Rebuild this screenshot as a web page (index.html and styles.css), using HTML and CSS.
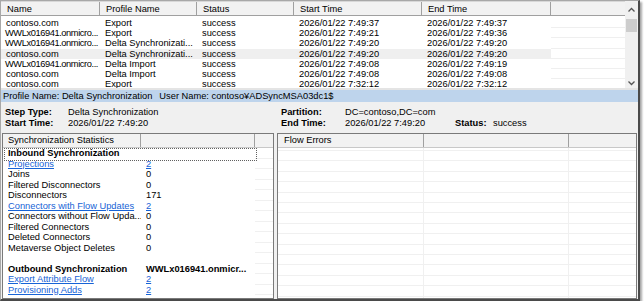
FILE: index.html
```html
<!DOCTYPE html>
<html>
<head>
<meta charset="utf-8">
<link rel="stylesheet" href="styles.css">
</head>
<body>
<div class="window">
  <div class="list">
    <div class="table">
      <div class="lrow head">
        <div class="c">Name</div><div class="c">Profile Name</div><div class="c">Status</div><div class="c">Start Time</div><div class="c">End Time</div><div class="c"></div>
      </div>
      <div class="lbody">
        <div class="lrow"><div class="c">contoso.com</div><div class="c">Export</div><div class="c">success</div><div class="c">2026/01/22 7:49:37</div><div class="c">2026/01/22 7:49:37</div><div class="c blank"></div></div>
        <div class="lrow"><div class="c tight">WWLx016941.onmicro...</div><div class="c">Export</div><div class="c">success</div><div class="c">2026/01/22 7:49:21</div><div class="c">2026/01/22 7:49:36</div><div class="c blank"></div></div>
        <div class="lrow"><div class="c tight">WWLx016941.onmicro...</div><div class="c">Delta Synchronizati...</div><div class="c">success</div><div class="c">2026/01/22 7:49:20</div><div class="c">2026/01/22 7:49:20</div><div class="c blank"></div></div>
        <div class="lrow sel"><div class="c">contoso.com</div><div class="c">Delta Synchronizati...</div><div class="c">success</div><div class="c">2026/01/22 7:49:20</div><div class="c">2026/01/22 7:49:20</div><div class="c blank"></div></div>
        <div class="lrow"><div class="c tight">WWLx016941.onmicro...</div><div class="c">Delta Import</div><div class="c">success</div><div class="c">2026/01/22 7:49:08</div><div class="c">2026/01/22 7:49:19</div><div class="c blank"></div></div>
        <div class="lrow"><div class="c">contoso.com</div><div class="c">Delta Import</div><div class="c">success</div><div class="c">2026/01/22 7:49:08</div><div class="c">2026/01/22 7:49:08</div><div class="c blank"></div></div>
        <div class="lrow"><div class="c">contoso.com</div><div class="c">Export</div><div class="c">success</div><div class="c">2026/01/22 7:32:12</div><div class="c">2026/01/22 7:32:12</div><div class="c blank"></div></div>
      </div>
    </div>
    <div class="vscroll">
      <svg class="arrow" width="13" height="10" viewBox="0 0 13 10"><path d="M3.5 6.5 L6.5 3.5 L9.5 6.5" fill="none" stroke="#555" stroke-width="1.3"/></svg>
      <div class="track"><div class="thumb"></div></div>
      <svg class="arrow" width="13" height="10" viewBox="0 0 13 10"><path d="M3.5 3.5 L6.5 6.5 L9.5 3.5" fill="none" stroke="#555" stroke-width="1.3"/></svg>
    </div>
  </div>
  <div class="splitter"></div>
  <div class="band"><span>Profile Name: Delta Synchronization</span><span class="user">User Name: contoso¥ADSyncMSA03dc1$</span></div>
  <div class="info">
    <div class="lbl">Step Type:</div><div>Delta Synchronization</div><div class="lbl">Partition:</div><div>DC=contoso,DC=com</div><div></div><div></div>
    <div class="lbl">Start Time:</div><div>2026/01/22 7:49:20</div><div class="lbl">End Time:</div><div>2026/01/22 7:49:20</div><div class="lbl">Status:</div><div>success</div>
  </div>
  <div class="panes">
    <div class="pane stats">
      <div class="srow phead"><div class="c">Synchronization Statistics</div><div class="c"></div><div class="c"></div></div>
      <div class="sbody">
        <div class="srow focus"><div class="c b">Inbound Synchronization</div><div class="c"></div><div class="c g"></div></div>
        <div class="srow"><div class="c"><a>Projections</a></div><div class="c"><a>2</a></div><div class="c g"></div></div>
        <div class="srow"><div class="c">Joins</div><div class="c">0</div><div class="c g"></div></div>
        <div class="srow"><div class="c">Filtered Disconnectors</div><div class="c">0</div><div class="c g"></div></div>
        <div class="srow"><div class="c">Disconnectors</div><div class="c">171</div><div class="c g"></div></div>
        <div class="srow"><div class="c"><a>Connectors with Flow Updates</a></div><div class="c"><a>2</a></div><div class="c g"></div></div>
        <div class="srow"><div class="c">Connectors without Flow Upda...</div><div class="c">0</div><div class="c g"></div></div>
        <div class="srow"><div class="c">Filtered Connectors</div><div class="c">0</div><div class="c g"></div></div>
        <div class="srow"><div class="c">Deleted Connectors</div><div class="c">0</div><div class="c g"></div></div>
        <div class="srow"><div class="c">Metaverse Object Deletes</div><div class="c">0</div><div class="c g"></div></div>
        <div class="srow"><div class="c"></div><div class="c"></div><div class="c g"></div></div>
        <div class="srow"><div class="c b">Outbound Synchronization</div><div class="c b">WWLx016941.onmicr...</div><div class="c g"></div></div>
        <div class="srow"><div class="c"><a>Export Attribute Flow</a></div><div class="c"><a>2</a></div><div class="c g"></div></div>
        <div class="srow"><div class="c"><a>Provisioning Adds</a></div><div class="c"><a>2</a></div><div class="c g"></div></div>
      </div>
    </div>
    <div class="pane flow">
      <div class="frow phead"><div class="c">Flow Errors</div><div class="c"></div><div class="c"></div></div>
      <div class="fbody"><div class="fc"></div><div class="fc"></div><div class="fc"></div></div>
    </div>
  </div>
</div>
</body>
</html>
```

FILE: styles.css
```css
* { box-sizing: border-box; }
html, body { margin: 0; padding: 0; background: #ffffff; }
body {
  font-family: "Liberation Sans", Arial, sans-serif;
  font-size: 9.3px;
  color: #000;
}
.window {
  width: 640px;
  height: 301px;
  border-top: 1px solid #a8a8a8;
  border-left: 1px solid #a8a8a8;
  border-right: 2px solid #4a4a4a;
  border-bottom: 2px solid #4a4a4a;
  box-shadow: 2px 2px 2px rgba(0,0,0,0.35);
  background: #f0f0f0;
  display: flex;
  flex-direction: column;
  overflow: hidden;
}
/* top list */
.list {
  height: 87px;
  display: flex;
  background: #fff;
  flex: none;
}
.table { width: 624px; overflow: hidden; }
.lrow {
  display: grid;
  grid-template-columns: 99px 97px 97px 128px 129px 74px;
  height: 10.2px;
  line-height: 10.2px;
  white-space: nowrap;
}
.lrow .c { padding-left: 5px; overflow: hidden; }
.lrow .c.tight { letter-spacing: -0.42px; padding-left: 4px; }
.lrow.head {
  height: 15px;
  line-height: 14px;
  background: #f2f2f2;
  border-top: 1px solid #d8d8d8;
  border-bottom: 1px solid #a0a0a0;
}
.lrow.head .c { border-right: 1px solid #a0a0a0; padding-left: 6px; }
.lrow.head .c:last-child { border-right: none; }
.lbody { padding-top: 2px; }
.lrow .blank { border-bottom: 1px solid #efefef; }
.lrow.sel .c:not(.blank) { background: #efefef; }
.vscroll {
  width: 13px;
  background: #f0f0f0;
  display: flex;
  flex-direction: column;
  padding-top: 4px;
}
.arrow { display: block; flex: none; }
.track { flex: 1; padding: 4px 0 0 1px; }
.thumb { width: 11px; height: 13px; background: #cdcdcd; }
.splitter { height: 2px; flex: none; background: #e4e4e4; }
.band {
  height: 12px;
  line-height: 12px;
  background: #bed4ec;
  padding-left: 2px;
  white-space: nowrap;
  flex: none;
}
.band .user { margin-left: 7px; }
/* info */
.info {
  height: 31px;
  flex: none;
  padding: 4.5px 0 0 4px;
  display: grid;
  grid-template-columns: 63px 213px 64px 110px 38px 1fr;
  grid-auto-rows: 11px;
  line-height: 11px;
  white-space: nowrap;
}
.lbl { font-weight: bold; }
/* panes */
.panes {
  flex: 1;
  display: flex;
  gap: 3px;
  padding-left: 1px;
}
.pane {
  border: 1px solid #7a7a7a;
  background: #fff;
  display: flex;
  flex-direction: column;
  overflow: hidden;
}
.stats { width: 272px; }
.flow { width: 360px; }
.srow, .frow {
  display: grid;
  white-space: nowrap;
}
.srow { grid-template-columns: 138px 114px 1fr; height: 10.5px; line-height: 10.5px; }
.frow { grid-template-columns: 146px 145px 1fr; }
.phead {
  height: 14px !important;
  line-height: 13px !important;
  background: #f2f2f2;
  border-bottom: 1px solid #c8c8c8;
}
.phead .c { border-right: 1px solid #a0a0a0; padding-left: 6px; }
.phead .c:last-child { border-right: none; }
.srow .c { padding-left: 5px; overflow: hidden; }
.srow .c.g { border-bottom: 1px solid #f0f0f0; padding-left: 0; }
.srow.focus { position: relative; }
.srow.focus::after {
  content: "";
  position: absolute;
  left: 1px; top: 0; width: 251px; height: 10.5px;
  border: 1px dotted #606060;
}
.b { font-weight: bold; }
a { color: #1763d6; text-decoration: underline; }
.fbody {
  flex: 1;
  display: grid;
  grid-template-columns: 146px 145px 1fr;
  background: repeating-linear-gradient(to bottom, #fff 0, #fff 2px, #f0f0f0 2px, #f0f0f0 3px, #fff 3px, #fff 10.4px);
}
.fc { border-right: 1px solid #f0f0f0; }
.fc:last-child { border-right: none; }
```
